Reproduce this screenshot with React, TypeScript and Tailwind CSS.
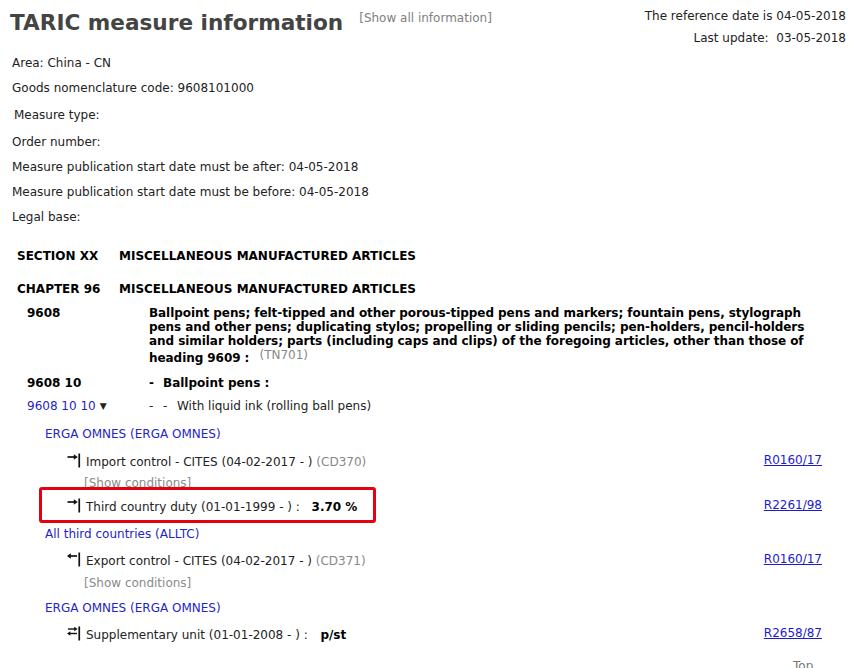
import type { ReactNode } from 'react'

type IconKind = 'import' | 'export' | 'both'

/* Small arrow + bar glyph used in front of each measure */
function MeasureIcon({ kind }: { kind: IconKind }) {
  return (
    <svg width="14" height="18" viewBox="0 0 14 18" className="shrink-0">
      <rect x="11.4" y="0.5" width="1.7" height="14" fill="#111" />
      {kind === 'import' && (
        <>
          <line x1="0.5" y1="4" x2="8.5" y2="4" stroke="#111" strokeWidth="1.7" />
          <polygon points="6.8,1.2 10.8,4 6.8,6.8" fill="#111" />
        </>
      )}
      {kind === 'export' && (
        <>
          <line x1="3" y1="4" x2="10" y2="4" stroke="#111" strokeWidth="1.7" />
          <polygon points="3.8,1.2 0,4 3.8,6.8" fill="#111" />
        </>
      )}
      {kind === 'both' && (
        <>
          <line x1="1" y1="3" x2="8.5" y2="3" stroke="#111" strokeWidth="1.4" />
          <polygon points="7.2,0.8 10.6,3 7.2,5.2" fill="#111" />
          <line x1="2.5" y1="7.5" x2="10" y2="7.5" stroke="#111" strokeWidth="1.4" />
          <polygon points="3.4,5.3 0,7.5 3.4,9.7" fill="#111" />
        </>
      )}
    </svg>
  )
}

function Measure({
  kind,
  reg,
  className,
  children,
}: {
  kind: IconKind
  reg?: string
  className: string
  children: ReactNode
}) {
  return (
    <div className={`flex items-center h-4 leading-4 pl-[67px] pr-[28px] ${className}`}>
      <MeasureIcon kind={kind} />
      <span className="ml-[5px] whitespace-nowrap">{children}</span>
      {reg && (
        <a href="#" className="ml-auto mb-[4px] text-[#1c1cce] underline">
          {reg}
        </a>
      )}
    </div>
  )
}

const INFO = [
  { text: 'Area: China - CN', cls: 'mt-[5px] pl-[12px]' },
  { text: 'Goods nomenclature code: 9608101000', cls: 'mt-[9px] pl-[12px]' },
  { text: 'Measure type:', cls: 'mt-[11px] pl-[14px]' },
  { text: 'Order number:', cls: 'mt-[11px] pl-[12px]' },
  { text: 'Measure publication start date must be after: 04-05-2018', cls: 'mt-[9px] pl-[12px]' },
  { text: 'Measure publication start date must be before: 04-05-2018', cls: 'mt-[9px] pl-[12px]' },
  { text: 'Legal base:', cls: 'mt-[9px] pl-[12px]' },
]

export default function App() {
  return (
    <div className="relative w-[850px] h-[668px] overflow-hidden bg-white text-[12px] text-[#222] font-['DejaVu_Sans',Verdana,sans-serif]">
      {/* ── Header ─────────────────────────────────────────── */}
      <header className="flex justify-between h-[50px]">
        <div className="flex items-start pl-[10px] pt-[10px]">
          <h1 className="text-[21.6px] leading-[26px] font-bold text-[#444] whitespace-nowrap">
            TARIC measure information
          </h1>
          <a href="#" className="ml-[16px] leading-4 text-[#808080] whitespace-nowrap">
            [Show all information]
          </a>
        </div>
        <div className="pt-[8px] pr-[4px] text-right leading-4 whitespace-nowrap">
          <div>The reference date is 04-05-2018</div>
          <div className="mt-[6px]">Last update:&nbsp; 03-05-2018</div>
        </div>
      </header>

      {/* ── Query info ─────────────────────────────────────── */}
      {INFO.map(row => (
        <div key={row.text} className={`leading-4 ${row.cls}`}>
          {row.text}
        </div>
      ))}

      {/* ── Nomenclature ───────────────────────────────────── */}
      <div className="font-bold text-black">
        <div className="flex mt-[23px] leading-4">
          <div className="w-[119px] pl-[17px]">SECTION XX</div>
          <div>MISCELLANEOUS MANUFACTURED ARTICLES</div>
        </div>
        <div className="flex mt-[17px] leading-4">
          <div className="w-[119px] pl-[17px]">CHAPTER 96</div>
          <div>MISCELLANEOUS MANUFACTURED ARTICLES</div>
        </div>
        <div className="flex mt-[9px] h-[60px] leading-[14px]">
          <div className="w-[149px] shrink-0 pl-[27px]">9608</div>
          <div className="whitespace-nowrap tracking-[-0.06px]">
            Ballpoint pens; felt-tipped and other porous-tipped pens and markers; fountain pens, stylograph
            <br />
            pens and other pens; duplicating stylos; propelling or sliding pencils; pen-holders, pencil-holders
            <br />
            and similar holders; parts (including caps and clips) of the foregoing articles, other than those of
            <br />
            heading 9609 :{' '}
            <span className="ml-[6px] font-normal text-[#888] align-[3px] tracking-normal">(TN701)</span>
          </div>
        </div>
        <div className="flex mt-[9px] leading-4">
          <div className="w-[149px] shrink-0 pl-[27px]">9608 10</div>
          <div>
            <span className="inline-block w-[14px]">-</span>Ballpoint pens :
          </div>
        </div>
      </div>

      <div className="flex mt-[7px] leading-4">
        <div className="w-[149px] shrink-0 pl-[27px]">
          <a href="#" className="text-[#2424c8]">9608 10 10</a>
          <span className="ml-[4px] text-[9px] align-[1px]">▼</span>
        </div>
        <div>
          <span className="inline-block w-[14px]">-</span>
          <span className="inline-block w-[14px]">-</span>
          With liquid ink (rolling ball pens)
        </div>
      </div>

      {/* ── Measures ───────────────────────────────────────── */}
      <div className="mt-[12px] pl-[45px] leading-4 text-[#2424c8]">ERGA OMNES (ERGA OMNES)</div>
      <Measure kind="import" reg="R0160/17" className="mt-[12px]">
        Import control - CITES (04-02-2017 - ) <span className="text-[#888]">(CD370)</span>
      </Measure>
      <div className="mt-[5px] pl-[84px] leading-4 text-[#8a8a8a]">[Show conditions]</div>
      <Measure kind="import" reg="R2261/98" className="mt-[8px]">
        Third country duty (01-01-1999 - ) :&nbsp; <b className="ml-[4px] text-black">3.70 %</b>
      </Measure>

      <div className="mt-[11px] pl-[45px] leading-4 text-[#2424c8]">All third countries (ALLTC)</div>
      <Measure kind="export" reg="R0160/17" className="mt-[11px]">
        Export control - CITES (04-02-2017 - ) <span className="text-[#888]">(CD371)</span>
      </Measure>
      <div className="mt-[6px] pl-[84px] leading-4 text-[#8a8a8a]">[Show conditions]</div>

      <div className="mt-[9px] pl-[45px] leading-4 text-[#2424c8]">ERGA OMNES (ERGA OMNES)</div>
      <Measure kind="both" reg="R2658/87" className="mt-[11px]">
        Supplementary unit (01-01-2008 - ) :&nbsp; <b className="ml-[5px] text-black">p/st</b>
      </Measure>

      <div className="mt-[15px] pl-[793px] leading-4 text-[#777]">Top</div>

      {/* Highlight annotation */}
      <div className="absolute left-[39px] top-[487px] w-[337px] h-[36px] border-[3px] border-[#e4000f] rounded-[3px]" />
    </div>
  )
}
